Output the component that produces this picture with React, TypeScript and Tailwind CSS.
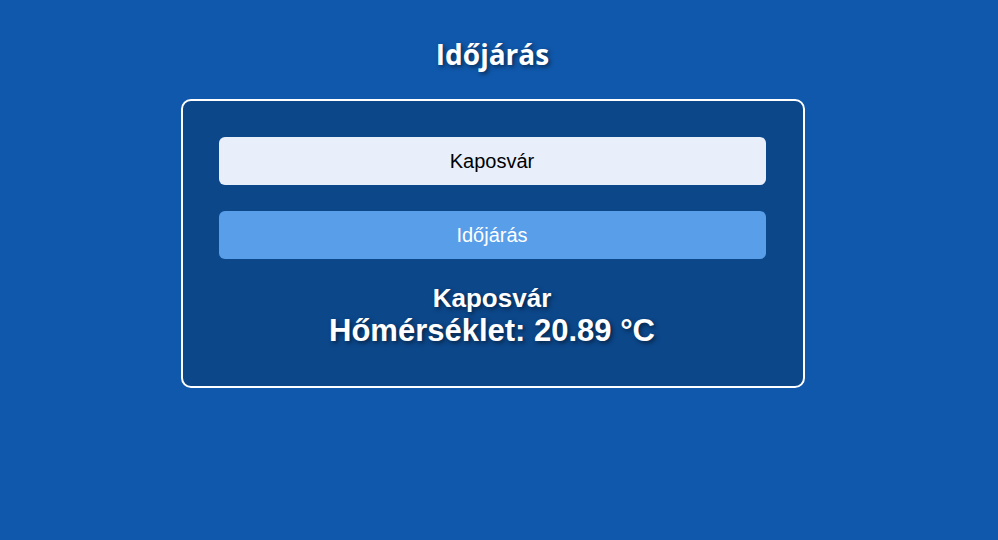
import { useState } from "react";

export default function App() {
  const [city, setCity] = useState<string>("Kaposvár");

  return (
    <div className="min-h-screen w-full bg-[#1058ab]">
      <div className="w-[985px] flex flex-col items-center pt-[34px]">
        <h1
          className="text-[28px] leading-[40px] font-bold text-white [text-shadow:2px_2px_4px_rgba(0,0,0,0.5)]"
          style={{ fontFamily: '"Open Sans", "Noto Sans", sans-serif' }}
        >
          Időjárás
        </h1>

        <div
          className="mt-[25px] w-[624px] h-[289px] rounded-[10px] border-2 border-white bg-[#0c478a] pl-[36px] pr-[37px] pt-[36px] flex flex-col"
          style={{ fontFamily: '"Liberation Sans", Arial, sans-serif' }}
        >
          <input
            value={city}
            onChange={(e) => setCity(e.target.value)}
            className="h-[48px] w-full rounded-[6px] bg-[#e8effb] text-center text-[20px] text-black outline-none"
          />
          <button className="mt-[26px] h-[48px] w-full rounded-[6px] bg-[#589ee9] text-[20px] text-white">
            Időjárás
          </button>

          <div className="mt-[24px] flex flex-col items-center text-white font-bold [text-shadow:2px_2px_4px_rgba(0,0,0,0.5)]">
            <div className="text-[26px] leading-[30px]">{city}</div>
            <div className="text-[31px] leading-[36px]">Hőmérséklet: 20.89 °C</div>
          </div>
        </div>
      </div>
    </div>
  );
}
